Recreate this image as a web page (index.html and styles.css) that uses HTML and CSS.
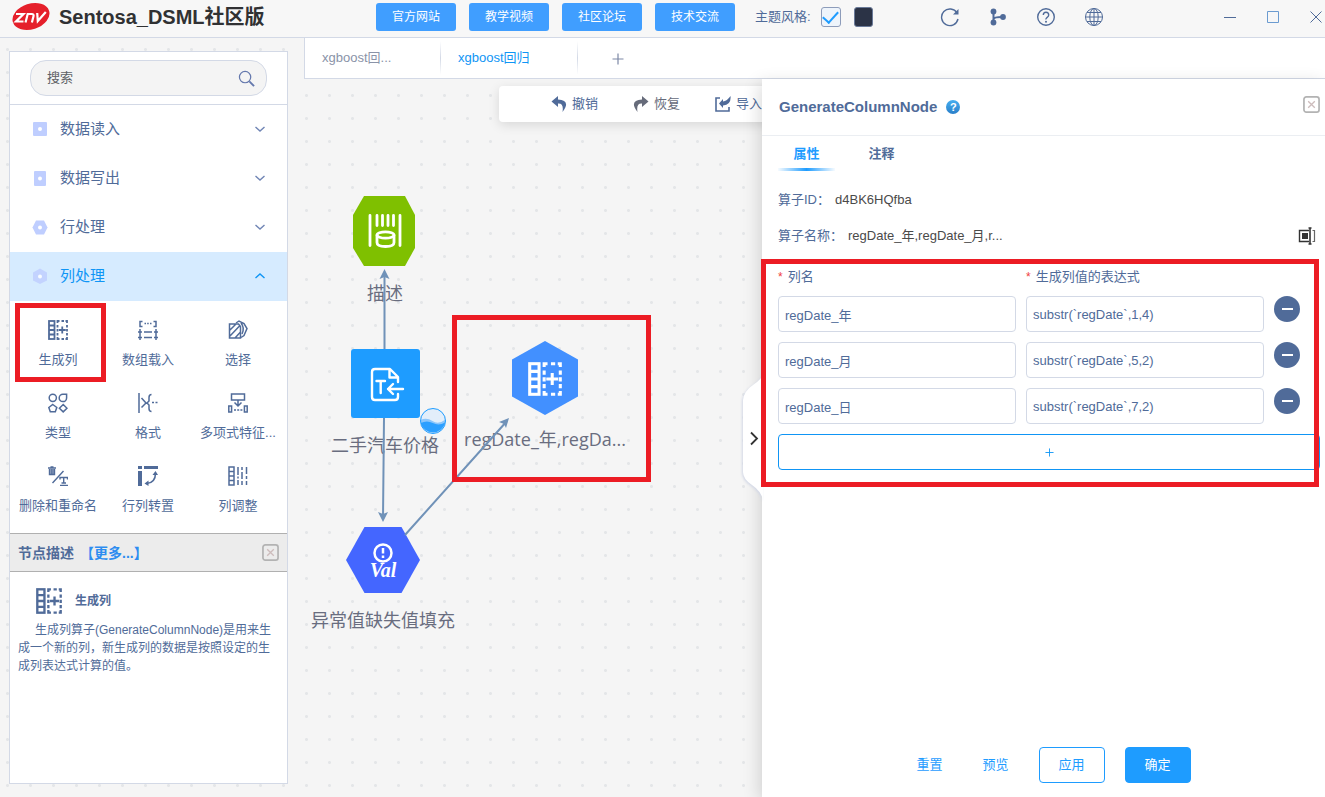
FILE: index.html
```html
<!DOCTYPE html>
<html lang="zh-CN">
<head>
<meta charset="utf-8">
<title>Sentosa_DSML社区版</title>
<meta name="viewport" content="width=device-width, initial-scale=1">
<link rel="stylesheet" href="styles.css">
</head>
<body>
<svg class="sprite" aria-hidden="true">
  <symbol id="i-gen" viewBox="0 0 40 40">
    <g fill="none" stroke="currentColor" stroke-width="3.600">
      <rect x="2" y="2" width="11" height="36"/>
      <path d="M2 11h11M2 20h11M2 29h11"/>
      <path d="M19 6V2h4M27 2h5M35 2h3v4M38 10v5M38 18v5M38 26v5M38 34v4h-3M32 38h-5M23 38h-4v-4M19 31v-5M19 23v-5M19 15v-5"/>
      <path d="M28.500 13v14M21.500 20h14"/>
    </g>
  </symbol>
  <symbol id="i-down" viewBox="0 0 12 12"><path d="M1.500 4l4.500 4 4.500-4" fill="none" stroke="currentColor" stroke-width="1.400"/></symbol>
  <symbol id="i-closebox" viewBox="0 0 18 18">
    <rect x="1" y="1" width="16" height="16" rx="2.500" fill="none" stroke="#b3b3b3" stroke-width="1.800"/>
    <path d="M5.500 5.500l7 7M12.500 5.500l-7 7" stroke="#cdbcbc" stroke-width="1.400"/>
  </symbol>
</svg>

<header class="topbar">
  <div class="brand">
    <svg class="brand-logo" viewBox="0 0 38 29" aria-hidden="true">
      <ellipse cx="19" cy="14.500" rx="19" ry="12.800" fill="#e5202b" transform="rotate(-18 19 14.500)"/>
      <g fill="none" stroke="#fff" stroke-width="2.200">
        <path d="M4 12h7.500L4 19.500h7.500"/>
        <path d="M13.500 20.500l2.200-8.500h4q2.400 0 1.800 2.300l-1.600 6.200"/>
        <path d="M25.200 11l.600 8 8-9"/>
      </g>
    </svg>
    <h1 class="brand-title">Sentosa_DSML社区版</h1>
  </div>
  <nav class="links">
    <button class="link-btn">官方网站</button>
    <button class="link-btn">教学视频</button>
    <button class="link-btn">社区论坛</button>
    <button class="link-btn">技术交流</button>
  </nav>
  <div class="theme">
    <label for="theme-light">主题风格:</label>
    <input class="theme-check" type="checkbox" id="theme-light" checked>
    <button class="theme-dark" aria-label="深色"></button>
  </div>
  <div class="actions">
    <button class="icon-btn" aria-label="刷新"><svg viewBox="0 0 20 20"><path d="M17 6A8.300 8.300 0 1 0 18 12" fill="none" stroke="currentColor" stroke-width="1.400"/><path d="M18.500 2v5.500H13z" fill="currentColor"/></svg></button>
    <button class="icon-btn" aria-label="流程"><svg viewBox="0 0 20 20"><path d="M5.500 4v12M5.500 12Q6 10 14 10" fill="none" stroke="currentColor" stroke-width="2"/><g fill="currentColor"><circle cx="5.500" cy="4.500" r="2.900"/><circle cx="5.500" cy="15.500" r="2.900"/><circle cx="15" cy="10" r="2.900"/></g></svg></button>
    <button class="icon-btn" aria-label="帮助"><svg viewBox="0 0 20 20"><g fill="none" stroke="currentColor" stroke-width="1.400"><circle cx="10" cy="10" r="8.300"/><path d="M7.300 8q0-2.800 2.700-2.800T12.700 8q0 1.300-1.500 2.300T10 12.500"/></g><circle cx="10" cy="14.700" r="1" fill="currentColor"/></svg></button>
    <button class="icon-btn" aria-label="语言"><svg viewBox="0 0 20 20"><g fill="none" stroke="currentColor" stroke-width="1"><circle cx="10" cy="10" r="8.500"/><ellipse cx="10" cy="10" rx="4.200" ry="8.500"/><path d="M10 1.500v17M1.500 10h17M3 5.500h14M3 14.500h14"/></g></svg></button>
  </div>
  <div class="window-controls">
    <button class="win-btn" aria-label="最小化"><svg viewBox="0 0 14 14"><path d="M1 7.500h12" stroke="currentColor" fill="none"/></svg></button>
    <button class="win-btn" aria-label="最大化"><svg viewBox="0 0 14 14"><path d="M1.500 1.500h11v11h-11z" stroke="#6b9bd0" fill="none"/></svg></button>
    <button class="win-btn" aria-label="关闭"><svg viewBox="0 0 14 14"><path d="M1.500 1.500l11 11M12.500 1.500l-11 11" stroke="currentColor" fill="none"/></svg></button>
  </div>
</header>

<main class="layout">
  <aside class="sidebar">
    <div class="search-wrap">
      <div class="search">
        <input class="search-input" type="text" placeholder="搜索" aria-label="搜索">
        <svg class="search-icon" viewBox="0 0 18 18" aria-hidden="true"><g fill="none" stroke="#6478ad"><circle cx="7.500" cy="7.500" r="6" stroke-width="1.300"/><path d="M12 12l5 5" stroke-width="2"/></g></svg>
      </div>
    </div>
    <nav class="menu">
      <button class="menu-item"><svg class="menu-mark" viewBox="0 0 16 16"><rect x="1" y="1" width="14" height="14" rx="1" fill="#bfceff"/><circle cx="8" cy="8" r="2" fill="#fff"/></svg><span>数据读入</span><svg class="chevron"><use href="#i-down"/></svg></button>
      <button class="menu-item"><svg class="menu-mark" viewBox="0 0 16 16"><rect x="2" y="1" width="12" height="15" rx="1" fill="#bfceff"/><circle cx="8" cy="8.500" r="2" fill="#fff"/></svg><span>数据写出</span><svg class="chevron"><use href="#i-down"/></svg></button>
      <button class="menu-item"><svg class="menu-mark" viewBox="0 0 16 16"><path d="M4 1.500h8L15.500 8.500 12 15.500H4L.500 8.500z" fill="#bfceff"/><circle cx="8" cy="8.500" r="2" fill="#fff"/></svg><span>行处理</span><svg class="chevron"><use href="#i-down"/></svg></button>
      <button class="menu-item open"><svg class="menu-mark" viewBox="0 0 16 16"><path d="M8 .500l7 4v8l-7 3.500-7-3.500v-8z" fill="#bfceff"/><circle cx="8" cy="8.500" r="2" fill="#fff"/></svg><span>列处理</span><svg class="chevron"><use href="#i-down"/></svg></button>
    </nav>
    <div class="operators">
      <button class="operator marked"><svg><use href="#i-gen"/></svg><span>生成列</span></button>
      <button class="operator"><svg viewBox="0 0 20 20"><g fill="none" stroke="currentColor" stroke-width="1.500"><path d="M4.500 1.500H2v5h2.500M15.500 1.500H18v5h-2.500M6.500 3.500h1.500M9.200 3.500h1.500M12 3.500h1.500M6 12h8M6 17.500h8M0 12h4M16 12h4M0 17.500h4M16 17.500h4"/><path d="M2 9v11M18 9v11"/></g></svg><span>数组载入</span></button>
      <button class="operator"><svg viewBox="0 0 20 20"><g fill="none" stroke="currentColor" stroke-width="1.500"><path d="M1.500 4h9l2 2.500V18h-11zM2 10l6-6M2 16L11.500 6M7 18l5.500-6"/><path d="M8 3l3-2 5 2.500 3 5-3 7-3 2M13 3q4 5 1 11"/></g></svg><span>选择</span></button>
      <button class="operator"><svg viewBox="0 0 20 20"><g fill="none" stroke="currentColor" stroke-width="1.500"><circle cx="4.800" cy="4.800" r="3.600"/><path d="M15 1.200h3.600V5A3.700 3.700 0 1 1 15 1.200zM4.800 11.500l4 3-1.500 4.300h-5L.800 14.500zM15.200 11.500l3.800 3.700-3.800 3.700-3.800-3.700z"/></g></svg><span>类型</span></button>
      <button class="operator"><svg viewBox="0 0 20 20"><g fill="none" stroke="currentColor" stroke-width="1.500"><path d="M1 0v20M3.500 5l4.500 5-4.500 4.500M13.500 1.500q-2.500 0-2.500 3V8L9 10l2 2v3.500q0 3 2.500 3M14 9.500h2M17.500 9.500h2"/></g></svg><span>格式</span></button>
      <button class="operator"><svg viewBox="0 0 20 20"><g fill="none" stroke="currentColor" stroke-width="1.500"><path d="M3.500 1h13v6h-13zM10 7v5M6.500 9.500l3.500 3.500 3.500-3.500M.800 13h2.800v6H.800zM16.400 13h2.800v6h-2.800z"/><path d="M6 17h2M9.200 17h2M12.400 17h2"/></g></svg><span>多项式特征...</span></button>
      <button class="operator"><svg viewBox="0 0 20 20"><g fill="none" stroke="currentColor" stroke-width="1.400"><path d="M0 2h8M2.500 1h3M1.500 3v5.500h5V3M3.200 3v5M4.900 3v5M4.500 17L15.500 5"/><path d="M12 13.500V11.500h7.500v2M15.700 11.500V17M13.500 17h4.500M12 19.500h8"/></g></svg><span>删除和重命名</span></button>
      <button class="operator"><svg viewBox="0 0 20 20"><path d="M0 0h4v3H0zM6 0h14v3H6zM0 5h4v15H0z" fill="currentColor"/><path d="M17.500 7q0 10-9 10.500" fill="none" stroke="currentColor" stroke-width="1.600"/><path d="M14.500 9l3-4 2.500 4zM10.500 14.500l-4 3 4 2.500z" fill="currentColor"/></svg><span>行列转置</span></button>
      <button class="operator"><svg viewBox="0 0 20 20"><g fill="none" stroke="currentColor" stroke-width="1.500"><path d="M1 1h5v18H1zM1 5.500h5M1 10h5M1 14.500h5"/><path d="M10 1v8M10 10.500v2M10 14v5M14 1v3M14 6v7M14 15v4M18.500 1v7M18.500 10v3M18.500 15v4"/></g></svg><span>列调整</span></button>
    </div>
    <section class="desc">
      <header class="desc-head">
        <h2 class="desc-title">节点描述</h2>
        <a class="desc-more" href="#">【更多...】</a>
        <button class="close-btn" aria-label="关闭"><svg><use href="#i-closebox"/></svg></button>
      </header>
      <div class="desc-body">
        <h3 class="desc-name"><svg><use href="#i-gen"/></svg>生成列</h3>
        <p class="desc-text">生成列算子(GenerateColumnNode)是用来生成一个新的列，新生成列的数据是按照设定的生成列表达式计算的值。</p>
      </div>
    </section>
  </aside>

  <section class="workspace">
    <nav class="tabs">
      <button class="tab">xgboost回...</button>
      <button class="tab current">xgboost回归</button>
      <button class="tab-add" aria-label="新建"><svg viewBox="0 0 12 12"><path d="M6 .500v11M.500 6h11" stroke="currentColor" stroke-width="1.200"/></svg></button>
    </nav>
    <div class="stage">
      <div class="canvas">
        <div class="toolbar">
          <button class="tool"><svg viewBox="0 0 16 16"><path d="M7 0L.500 5.500 7 11V7.500q6-.500 4.500 8.500 9-11.500-4.500-12.500z" fill="currentColor"/></svg>撤销</button>
          <button class="tool muted"><svg viewBox="0 0 16 16"><path d="M9 0l6.500 5.500L9 11V7.500q-6-.500-4.500 8.500-9-11.500 4.500-12.500z" fill="currentColor"/></svg>恢复</button>
          <button class="tool"><svg viewBox="0 0 16 16"><path d="M5 2H1v13h13v-4" fill="none" stroke="currentColor" stroke-width="1.600"/><path d="M4 7.500l4-4.500v2.500Q12 5 15.500 0q1 9-7.500 9.500V12z" fill="currentColor"/></svg>导入</button>
        </div>

        <div class="node node-describe">
          <svg class="shape" width="64" height="70" viewBox="0 0 64 70">
            <path d="M11 0h41l10 19v33L52 70H11L0 52V19z" fill="#7fc000"/>
            <g fill="none" stroke="#fff" stroke-width="2.800" stroke-linecap="round"><path d="M17 19.500v30M47 19.500v30M24 19.500v10M29.500 19.500v10M35 19.500v10M40.500 19.500v10"/><path d="M24 39.500v7q0 4 8.500 4t8.500-4v-7"/><ellipse cx="32.500" cy="39" rx="8.500" ry="3.200"/></g>
          </svg>
          <span class="node-label">描述</span>
        </div>

        <div class="node node-source">
          <svg class="shape" width="69" height="69" viewBox="0 0 69 69">
            <rect width="69" height="69" rx="3" fill="#1e9cff"/>
            <g fill="none" stroke="#fff" stroke-width="2.400" stroke-linecap="round" stroke-linejoin="round"><path d="M47 33v-5l-8-8H24q-3 0-3 3v25q0 3 3 3h20q3 0 3-3v-3M38.500 20v8.500H47"/><path d="M25.500 32h8.500M29.700 32v12M52 40H37M42 35l-5 5 5 5"/></g>
          </svg>
          <span class="node-label">二手汽车价格</span>
          <svg class="badge" viewBox="0 0 26 26" aria-hidden="true">
            <circle cx="13" cy="13" r="12.500" fill="#e2eefa"/>
            <path d="M.500 12q6-3 12 1t13-1.500a12.500 12.500 0 0 1-25 1.500z" fill="#8cc6fb"/>
            <path d="M.800 15q6-3 12 0t12.300-.500a12.500 12.500 0 0 1-24.300.500z" fill="#2b9fff"/>
            <circle cx="13" cy="13" r="12.500" fill="none" stroke="#1e9cff"/>
          </svg>
        </div>

        <div class="node node-generate">
          <svg class="shape" width="66" height="74" viewBox="0 0 66 74">
            <path d="M33 0l33 18.500v37L33 74 0 55.500v-37z" fill="#4290ff"/>
            <svg x="16" y="21" width="34" height="34" color="#fff"><use href="#i-gen"/></svg>
          </svg>
          <span class="node-label">regDate_年,regDa...</span>
        </div>

        <div class="node node-fill">
          <svg class="shape" width="74" height="66" viewBox="0 0 74 66">
            <path d="M18.500 0h37L74 33 55.500 66h-37L0 33z" fill="#4466ff"/>
            <circle cx="37" cy="26" r="8.500" fill="none" stroke="#fff" stroke-width="2.500"/>
            <path d="M37 21v5.500M37 28.500v2.500" stroke="#fff" stroke-width="2.500"/>
            <text class="shape-text" x="37" y="50" text-anchor="middle">Val</text>
          </svg>
          <span class="node-label">异常值缺失值填充</span>
        </div>

        <svg class="edges" aria-hidden="true">
          <g fill="none" stroke="#7092b8" stroke-width="2">
            <path d="M80.500 270V194M80 339l-1 101M101 456L203 342"/>
          </g>
          <g fill="#7092b8">
            <path d="M80.500 190l5 10-5-2-5 2z"/>
            <path d="M79 443l-5-10 5 2 5-2z"/>
            <path d="M205 339l-3 10-2-4-5-2z"/>
          </g>
        </svg>
        <div class="marker" aria-hidden="true"></div>
      </div>

      <aside class="drawer">
        <button class="drawer-handle" aria-label="收起">
          <svg viewBox="0 0 20 126"><path d="M20 0Q19 5 10 11T0 26v72q0 7 9 13t11 15z" fill="#fff"/><path d="M8 58.500l6 6-6 6" fill="none" stroke="#333" stroke-width="1.800"/></svg>
        </button>
        <header class="drawer-head">
          <h2 class="drawer-title">GenerateColumnNode</h2>
          <button class="help-dot" aria-label="帮助">?</button>
          <button class="close-btn" aria-label="关闭"><svg><use href="#i-closebox"/></svg></button>
        </header>
        <nav class="subtabs">
          <button class="subtab current">属性</button>
          <button class="subtab">注释</button>
        </nav>
        <div class="drawer-body">
          <dl class="fact"><dt>算子ID：</dt><dd>d4BK6HQfba</dd></dl>
          <dl class="fact"><dt>算子名称：</dt><dd>regDate_年,regDate_月,r...</dd>
            <dd class="rename"><button class="rename-btn" aria-label="重命名"><svg viewBox="0 0 18 18"><g fill="none" stroke="#333"><path d="M11 3.500H1.500v11H11" stroke-width="1.400"/><path d="M10.500 1h3M10.500 17h3M12 1v16" stroke-width="1.600"/><path d="M14.500 3.500h2v11h-2" stroke="#666" stroke-width="1.200"/></g><path d="M4 6h6v6H4z" fill="#333"/></svg></button></dd></dl>
          <form class="columns-form">
            <div class="row heads"><span class="req" id="h-name">列名</span><span class="req" id="h-expr">生成列值的表达式</span></div>
            <div class="row"><input class="field" type="text" value="regDate_年" aria-labelledby="h-name"><input class="field" type="text" value="substr(`regDate`,1,4)" aria-labelledby="h-expr"><button type="button" class="remove" aria-label="删除"></button></div>
            <div class="row"><input class="field" type="text" value="regDate_月" aria-labelledby="h-name"><input class="field" type="text" value="substr(`regDate`,5,2)" aria-labelledby="h-expr"><button type="button" class="remove" aria-label="删除"></button></div>
            <div class="row"><input class="field" type="text" value="regDate_日" aria-labelledby="h-name"><input class="field" type="text" value="substr(`regDate`,7,2)" aria-labelledby="h-expr"><button type="button" class="remove" aria-label="删除"></button></div>
            <button type="button" class="add-row" aria-label="添加"><svg viewBox="0 0 10 10"><path d="M5 .500v9M.500 5h9" stroke="currentColor"/></svg></button>
          </form>
        </div>
        <footer class="drawer-foot">
          <button class="text-btn">重置</button>
          <button class="text-btn">预览</button>
          <button class="btn">应用</button>
          <button class="btn primary">确定</button>
        </footer>
      </aside>
    </div>
  </section>
</main>
</body>
</html>
```

FILE: styles.css
```css
:root {
  --ink: #506b99;
  --blue: #1e9cff;
  --line: #d3d9e6;
  --red: #ec1c24;
}
* { box-sizing: border-box; }
body {
  margin: 0;
  height: 100vh;
  display: flex;
  flex-direction: column;
  overflow: hidden;
  color: var(--ink);
  font: 13px/18px "Liberation Sans", "Noto Sans CJK SC", sans-serif;
}
button, input { font: inherit; color: inherit; }
button { padding: 0; border: 0; background: none; cursor: pointer; }
h1, h2, h3, p, dl, dd { margin: 0; }
svg { display: block; }
.sprite { position: absolute; width: 0; height: 0; }

/* top bar */
.topbar {
  flex: none;
  height: 38px;
  padding: 0 2px 4px 12px;
  display: flex;
  align-items: center;
  background: #f7f7f7;
  border-bottom: 1px solid var(--line);
}
.brand { flex: 0 0 364px; display: flex; align-items: center; gap: 9px; }
.brand-logo { width: 38px; height: 29px; }
.brand-title { font-size: 20px; line-height: 28px; font-weight: bold; color: #303133; }
.links { display: flex; gap: 13px; }
.link-btn {
  width: 80px;
  height: 28px;
  border-radius: 3px;
  background: #409eff;
  color: #fff;
  font-size: 12px;
}
.theme { display: flex; align-items: center; gap: 13px; margin-left: 20px; }
.theme-check {
  appearance: none;
  width: 20px;
  height: 20px;
  margin: 0 0 0 -3px;
  display: grid;
  place-items: center;
  border: 1px solid #8d9cba;
  border-radius: 3px;
  background: #eef4fb;
}
.theme-check:checked::before {
  content: "";
  width: 7px;
  height: 13px;
  margin-bottom: 4px;
  border: solid var(--blue);
  border-width: 0 2px 2px 0;
  transform: rotate(42deg);
}
.theme-dark { width: 19px; height: 20px; border-radius: 3px; background: #2b3346; border: 1px solid #6a7a99; }
.actions { display: flex; gap: 28px; margin-left: 67px; }
.icon-btn svg { width: 20px; height: 20px; }
.window-controls { display: flex; gap: 29px; margin-left: auto; }
.win-btn svg { width: 14px; height: 14px; }

/* page layout */
.layout {
  flex: 1;
  min-height: 0;
  display: flex;
  gap: 16px;
  padding-left: 9px;
  background: #f5f5f5 radial-gradient(circle, #e4e6e8 1px, transparent 2px) -4px 0 / 23px 23px;
}
.sidebar {
  flex: 0 0 279px;
  margin: 13px 0;
  display: flex;
  flex-direction: column;
  background: #fff;
  border: 1px solid var(--line);
}
.search-wrap { padding: 8px 20px; border-bottom: 1px solid var(--line); }
.search {
  height: 36px;
  display: flex;
  align-items: center;
  padding: 0 11px 0 16px;
  border: 1px solid var(--line);
  border-radius: 16px;
  background: #f4f4f4;
}
.search-input { flex: 1; min-width: 0; padding: 0; border: 0; background: none; outline: 0; }
.search-input::placeholder { color: #606266; }
.search-icon { width: 17px; height: 17px; }
.menu-item {
  width: 100%;
  height: 49px;
  display: flex;
  align-items: center;
  gap: 12px;
  padding: 0 21px 2px 22px;
  font-size: 15px;
}
.menu-mark { width: 16px; height: 16px; }
.chevron { width: 12px; height: 12px; margin-left: auto; color: #7085b5; }
.menu-item.open { background: #d6ebff; color: #0f95f5; }
.menu-item.open .menu-mark { opacity: .8; }
.menu-item.open .chevron { transform: rotate(180deg); color: #0f95f5; }
.operators {
  display: grid;
  grid-template-columns: repeat(3, 1fr);
  grid-auto-rows: 73px;
  padding: 0 4px 13px 3px;
}
.operator {
  position: relative;
  display: flex;
  flex-direction: column;
  align-items: center;
  gap: 11px;
  padding-top: 19px;
  white-space: nowrap;
}
.operator svg { width: 20px; height: 20px; }
.marked::after {
  content: "";
  position: absolute;
  inset: 2px -3px -8px 2px;
  border: 5px solid var(--red);
}
.desc-head {
  height: 39px;
  display: flex;
  align-items: center;
  gap: 6px;
  padding: 0 8px;
  background: #ececec;
  border: solid #b0b0b0;
  border-width: 1px 0;
  font-size: 14px;
  font-weight: bold;
}
.desc-title { font-size: 14px; }
.desc-more { color: #2d8cf0; text-decoration: none; }
.close-btn { margin-left: auto; }
.close-btn svg { width: 17px; height: 17px; }
.desc-body { padding: 16px 12px 16px 8px; font-size: 12px; }
.desc-name { display: flex; align-items: center; gap: 13px; padding-left: 18px; font-size: 12px; }
.desc-name svg { width: 26px; height: 26px; }
.desc-text { margin-top: 7px; text-indent: 17px; }

/* workspace */
.workspace { flex: 1; min-width: 0; display: flex; flex-direction: column; }
.tabs {
  height: 41px;
  display: flex;
  background: #fff;
  border: solid var(--line);
  border-width: 0 0 1px 1px;
}
.tab {
  width: 136px;
  padding-left: 17px;
  text-align: left;
  border-right: 1px solid;
  border-image: linear-gradient(#fff 10%, var(--line), #fff 90%) 1;
  color: #8a93a8;
}
.tab.current { width: 137px; color: #0f95f5; }
.tab-add { padding: 2px 34px 0; color: #7c88a6; }
.tab-add svg { width: 12px; height: 12px; }
.stage { flex: 1; min-height: 0; display: flex; }
.canvas { flex: 1 1 458px; min-width: 0; position: relative; overflow: hidden; }
.toolbar {
  position: absolute;
  left: 195px;
  top: 7px;
  right: -200px;
  height: 36px;
  display: flex;
  align-items: center;
  gap: 35px;
  padding-left: 52px;
  background: #fff;
  border-radius: 4px;
  box-shadow: 0 3px 12px rgba(0, 0, 0, .12);
}
.tool { display: flex; align-items: center; gap: 5px; }
.tool.muted { color: #666b7a; }
.tool svg { width: 16px; height: 16px; }
.node {
  position: absolute;
  width: 162px;
  display: flex;
  flex-direction: column;
  align-items: center;
  gap: 15px;
}
.node-label {
  font: 18px/24px "Open Sans", "Noto Sans CJK SC", sans-serif;
  color: #696d7f;
  white-space: nowrap;
}
.node-describe { left: 0; top: 117px; }
.node-source { left: 0; top: 270px; }
.node-generate { left: 160px; top: 262px; gap: 12px; }
.node-fill { left: -2px; top: 448px; }
.badge { position: absolute; left: 116px; top: 59px; width: 26px; height: 26px; }
.shape-text { font: italic bold 20px "Liberation Serif", serif; fill: #fff; }
.edges { position: absolute; inset: 0; width: 100%; height: 100%; pointer-events: none; }
.marker {
  position: absolute;
  left: 148px;
  top: 236px;
  width: 199px;
  height: 167px;
  border: 5px solid var(--red);
}

/* property drawer */
.drawer {
  flex: 1 1 563px;
  min-width: 0;
  position: relative;
  display: flex;
  flex-direction: column;
  background: #fff;
  box-shadow: -3px 4px 16px rgba(0, 0, 0, .14);
}
.drawer-handle {
  position: absolute;
  left: -19px;
  top: calc(50% - 64px);
  filter: drop-shadow(-1px 1px 1px #d3d8e6);
}
.drawer-handle svg { width: 20px; height: 126px; }
.drawer-head {
  height: 57px;
  display: flex;
  align-items: center;
  gap: 9px;
  padding: 0 5px 0 17px;
  border-bottom: 1px solid #ebeef2;
}
.drawer-title { font-size: 15px; }
.drawer-head .close-btn { margin-bottom: 6px; }
.help-dot {
  width: 14px;
  height: 14px;
  border-radius: 50%;
  background: linear-gradient(#45aef0, #2a7fc9);
  color: #fff;
  font-size: 11px;
  line-height: 14px;
  font-weight: bold;
}
.subtabs { display: flex; gap: 18px; padding-left: 16px; }
.subtab {
  width: 57px;
  height: 35px;
  padding-top: 3px;
  font-weight: bold;
  border-bottom: 3px solid transparent;
}
.subtab.current {
  color: var(--blue);
  border-image: linear-gradient(90deg, #fff, var(--blue), #fff) 1;
}
.drawer-body { flex: 1; padding: 20px 5px 0 16px; }
.fact { display: flex; align-items: center; height: 18px; margin-bottom: 18px; }
.fact dd { color: #4a4a4a; margin-left: 5px; }
.fact .rename { margin-left: auto; padding-right: 4px; }
.rename-btn { display: block; }
.rename-btn svg { width: 18px; height: 18px; }
.columns-form { position: relative; display: flex; flex-direction: column; gap: 10px; margin-top: 23px; }
.columns-form::after {
  content: "";
  position: absolute;
  inset: -9px 1px -17px -17px;
  border: 5px solid var(--red);
  pointer-events: none;
}
.row {
  display: grid;
  grid-template-columns: 1fr 1fr 26px;
  gap: 10px;
  padding-right: 20px;
}
.req::before { content: "*"; margin-right: 5px; color: #f04040; font-size: 12px; }
.field {
  min-width: 0;
  height: 36px;
  padding: 0 6px;
  border: 1px solid var(--line);
  border-radius: 4px;
  background: #fff;
}
.remove {
  width: 26px;
  height: 26px;
  border-radius: 50%;
  background: linear-gradient(#fff, #fff) center / 11px 2px no-repeat var(--ink);
}
.add-row {
  height: 36px;
  display: grid;
  place-items: center;
  border: 1px solid #0f95f5;
  border-radius: 4px;
  color: #0f95f5;
}
.add-row svg { width: 9px; height: 9px; }
.drawer-foot {
  display: flex;
  justify-content: center;
  align-items: center;
  gap: 20px;
  padding: 0 0 14px 10px;
}
.text-btn { width: 46px; color: var(--blue); }
.btn {
  width: 66px;
  height: 36px;
  border: 1px solid var(--blue);
  border-radius: 4px;
  color: var(--blue);
}
.btn.primary { background: var(--blue); color: #fff; }
```
